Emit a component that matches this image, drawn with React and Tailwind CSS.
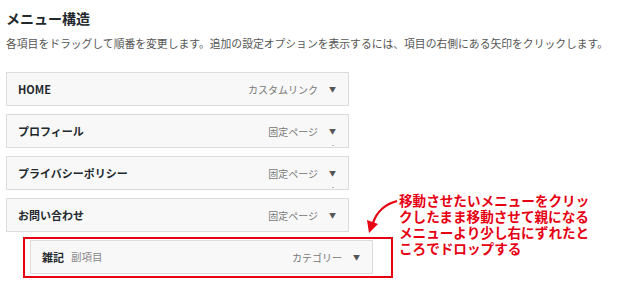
import React from 'react';

const font = { fontFamily: '"Noto Sans CJK JP", "Noto Sans", sans-serif' };

const items = [
    { id: 1, title: 'HOME', type: 'カスタムリンク' },
    { id: 2, title: 'プロフィール', type: '固定ページ', handle: true },
    { id: 3, title: 'プライバシーポリシー', type: '固定ページ', handle: true },
    { id: 4, title: 'お問い合わせ', type: '固定ページ' },
];

function MenuItem({ title, sub, type, handle }) {
    return (
        <div className="relative w-[343px] h-[34px] border border-[#dcdcdc] bg-[#f8f8f8] flex items-center pl-[11px] pr-[12px]">
            <span className="text-[11px] font-bold text-[#23282d]">{title}</span>
            {sub && <span className="ml-[7px] text-[10.5px] text-[#888]">{sub}</span>}
            <span className="ml-auto text-[10px] text-[#777]">{type}</span>
            <span className="ml-[11px] text-[7px] text-[#555]">▼</span>
            {handle && <span className="absolute right-[14px] bottom-[1px] w-[2px] h-[1px] bg-[#bbb]"></span>}
        </div>
    );
}

export default function App() {
    return (
        <div className="relative w-[640px] h-[288px] bg-white overflow-hidden pl-[6px]" style={font}>
            <h1 className="pt-[8px] text-[14px] leading-[20px] font-bold text-[#23282d]">メニュー構造</h1>
            <p className="mt-[7px] text-[10.8px] leading-[16px] text-[#555] whitespace-nowrap">
                各項目をドラッグして順番を変更します。追加の設定オプションを表示するには、項目の右側にある矢印をクリックします。
            </p>

            <div className="mt-[21px] flex flex-col gap-[8px]">
                {items.map(item => (
                    <MenuItem key={item.id} title={item.title} type={item.type} handle={item.handle} />
                ))}
            </div>

            <div className="mt-[5px] ml-[17px] w-[370px] h-[41px] border-2 border-[#e60012] pt-[1px] pl-[5px]">
                <MenuItem title="雑記" sub="副項目" type="カテゴリー" />
            </div>

            {/* 注釈 */}
            <div className="absolute left-[399px] top-[192px] text-[13.6px] leading-[16px] font-bold text-[#e60012] whitespace-nowrap">
                <p>移動させたいメニューをクリッ</p>
                <p>クしたまま移動させて親になる</p>
                <p>メニューより少し右にずれたと</p>
                <p>ころでドロップする</p>
            </div>
            <svg className="absolute left-[360px] top-[195px]" width="45" height="42" viewBox="0 0 45 42">
                <path d="M37 6 C 26 9, 17 16, 13 28" fill="none" stroke="#e60012" strokeWidth="2.2" />
                <path d="M7 25 L 9 38 L 18 29 Z" fill="#e60012" />
            </svg>
        </div>
    );
}
